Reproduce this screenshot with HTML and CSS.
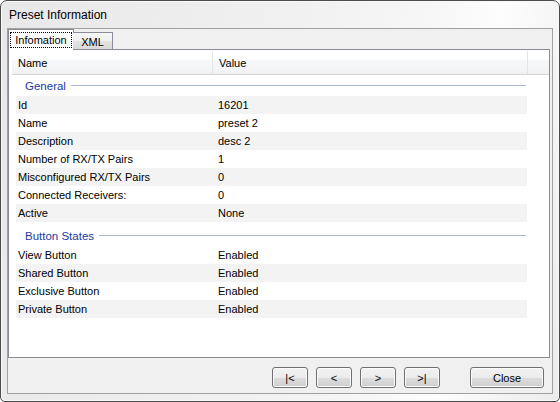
FILE: index.html
```html
<!DOCTYPE html>
<html>
<head>
<meta charset="utf-8">
<link rel="stylesheet" href="styles.css">
</head>
<body>
<div class="window">
  <div class="titlebar">Preset Information</div>
  <div class="client">
    <div class="tabs">
      <div class="tab tab-active"><span class="focus">Infomation</span></div>
      <div class="tab tab-idle">XML</div>
    </div>
    <div class="tabpage">
      <div class="list">
        <div class="header">
          <div class="hcell hname">Name</div>
          <div class="hcell hvalue">Value</div>
          <div class="hcell hrest"></div>
        </div>
        <div class="group"><span class="gtitle">General</span><span class="gline"></span></div>
        <div class="row alt"><span class="c1">Id</span><span class="c2">16201</span></div>
        <div class="row"><span class="c1">Name</span><span class="c2">preset 2</span></div>
        <div class="row alt"><span class="c1">Description</span><span class="c2">desc 2</span></div>
        <div class="row"><span class="c1">Number of RX/TX Pairs</span><span class="c2">1</span></div>
        <div class="row alt"><span class="c1">Misconfigured RX/TX Pairs</span><span class="c2">0</span></div>
        <div class="row"><span class="c1">Connected Receivers:</span><span class="c2">0</span></div>
        <div class="row alt"><span class="c1">Active</span><span class="c2">None</span></div>
        <div class="group group-next"><span class="gtitle">Button States</span><span class="gline"></span></div>
        <div class="row"><span class="c1">View Button</span><span class="c2">Enabled</span></div>
        <div class="row alt"><span class="c1">Shared Button</span><span class="c2">Enabled</span></div>
        <div class="row"><span class="c1">Exclusive Button</span><span class="c2">Enabled</span></div>
        <div class="row alt"><span class="c1">Private Button</span><span class="c2">Enabled</span></div>
      </div>
    </div>
    <div class="buttons">
      <button class="btn nav">|&lt;</button>
      <button class="btn nav">&lt;</button>
      <button class="btn nav">&gt;</button>
      <button class="btn nav">&gt;|</button>
      <button class="btn close">Close</button>
    </div>
  </div>
</div>
</body>
</html>
```

FILE: styles.css
```css
html, body {
  margin: 0;
  padding: 0;
  background: #ffffff;
}

.window {
  width: 560px;
  height: 402px;
  box-sizing: border-box;
  border: 1px solid #4b4b4b;
  border-radius: 7px 7px 5px 5px;
  padding: 0 6px 7px 6px;
  display: flex;
  flex-direction: column;
  background: linear-gradient(100deg, #e8e8e8 0%, #f0f0f0 45%, #f7f7f7 70%, #fdfdfd 80%, #ececec 100%);
  box-shadow: inset 0 0 0 1px #fafafa;
  font-family: "Liberation Sans", Arial, sans-serif;
  font-size: 11px;
  color: #000;
}

.titlebar {
  height: 27px;
  padding-left: 2px;
  display: flex;
  align-items: center;
  font-size: 12px;
  color: #000;
}

.client {
  flex: 1;
  border: 1px solid #a0a0a0;
  background: #f0f0f0;
  display: flex;
  flex-direction: column;
}

.tabs {
  display: flex;
  align-items: flex-end;
  height: 20px;
  margin-right: 2px;
  position: relative;
  z-index: 1;
}

.tab {
  box-sizing: border-box;
  border: 1px solid #898c95;
  border-bottom: none;
  display: flex;
  align-items: center;
  justify-content: center;
}

.tab-active {
  width: 66px;
  background: #ffffff;
  margin-bottom: -1px;
  height: 21px;
  padding: 0 1px;
}

.focus {
  display: block;
  box-sizing: border-box;
  width: 62px;
  height: 16px;
  line-height: 14px;
  text-align: center;
  border: 1px dotted #000;
}

.tab-idle {
  width: 40px;
  height: 17px;
  margin-left: -1px;
  border-left: none;
  background: linear-gradient(#f6f6f6 0%, #efefef 50%, #e3e3e3 51%, #d9d9d9 100%);
  padding-top: 1px;
}

.tabpage {
  height: 309px;
  box-sizing: border-box;
  border: 1px solid #898c95;
  margin-right: 2px;
  background: #ffffff;
}

.list {
  padding: 1px 0 0 3px;
}

.header {
  display: flex;
  height: 24px;
  box-sizing: border-box;
  border-bottom: 1px solid #d5d5d5;
  background: linear-gradient(#ffffff 0%, #ffffff 40%, #f7f8fa 41%, #f1f2f4 100%);
}

.hcell {
  box-sizing: border-box;
  display: flex;
  align-items: center;
  border-right: 1px solid #e3e4e6;
  padding-left: 6px;
}

.hname { width: 201px; }
.hvalue { width: 315px; }
.hrest { flex: 1; border-right: none; }

.group {
  display: flex;
  align-items: center;
  height: 21px;
  padding-left: 13px;
  padding-right: 23px;
}

.group-next {
  margin-top: 3px;
}

.gtitle {
  color: #1e3a9e;
  font-size: 11.5px;
}

.gline {
  flex: 1;
  height: 1px;
  margin-left: 5px;
  background: #aab8d4;
}

.row {
  display: flex;
  align-items: center;
  height: 18px;
  width: 511px;
  margin-left: 4px;
}

.row.alt {
  background: #f3f3f3;
}

.c1 {
  width: 196px;
  padding-left: 2px;
  box-sizing: border-box;
}

.c2 {
  padding-left: 6px;
}

.buttons {
  display: flex;
  justify-content: flex-end;
  align-items: flex-start;
  padding: 9px 8px 0 0;
  gap: 8px;
}

.btn {
  box-sizing: border-box;
  height: 21px;
  border: 1px solid #707070;
  border-radius: 3px;
  background: linear-gradient(#f2f2f2 0%, #ebebeb 50%, #dddddd 51%, #cfcfcf 100%);
  box-shadow: inset 0 0 0 1px #fbfbfb;
  font-family: "Liberation Sans", Arial, sans-serif;
  font-size: 11px;
  color: #000;
  padding: 0;
}

.nav { width: 36px; }

.close {
  width: 74px;
  margin-left: 22px;
}
```
